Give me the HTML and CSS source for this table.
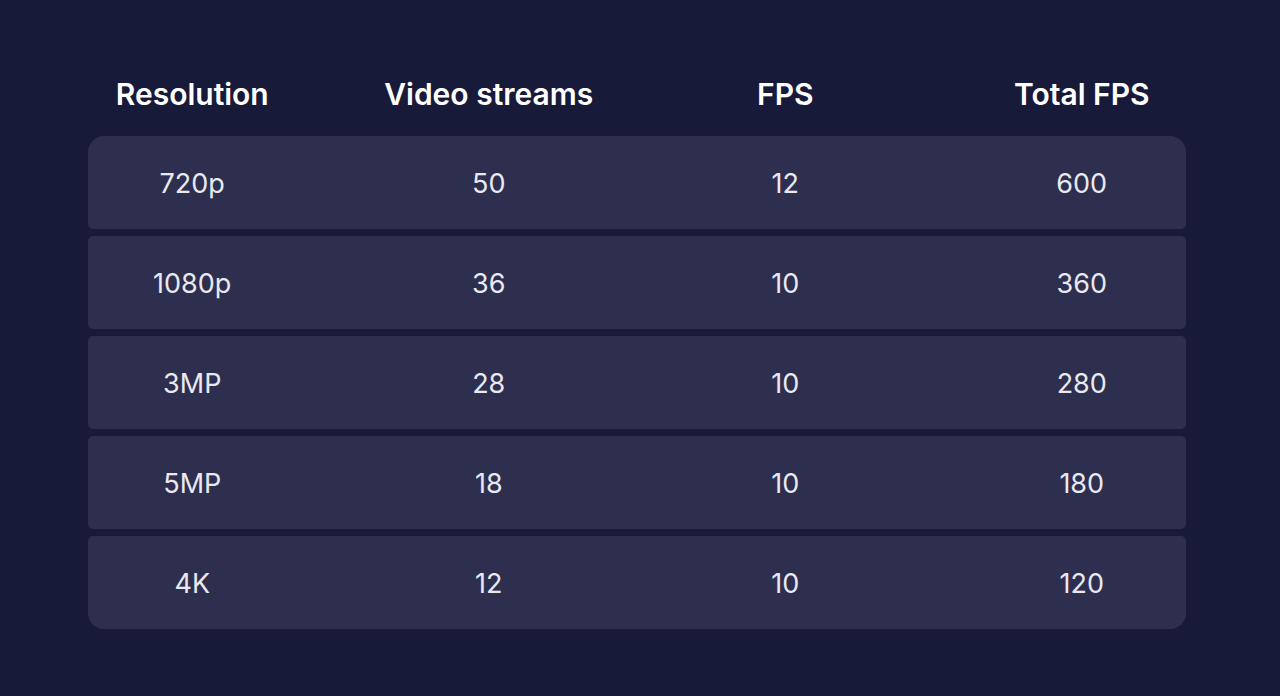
FILE: index.html
```html
<!DOCTYPE html>
<html lang="en">
<head>
<meta charset="utf-8">
<title>Streams table</title>
<link rel="stylesheet" href="styles.css">
</head>
<body>
<div class="page">
  <div class="table">
    <div class="head">
      <div class="cell">Resolution</div>
      <div class="cell">Video streams</div>
      <div class="cell">FPS</div>
      <div class="cell">Total FPS</div>
    </div>
    <div class="rows">
      <div class="row first"><div class="grid"><div class="cell">720p</div><div class="cell">50</div><div class="cell">12</div><div class="cell">600</div></div></div>
      <div class="row"><div class="grid"><div class="cell">1080p</div><div class="cell">36</div><div class="cell">10</div><div class="cell">360</div></div></div>
      <div class="row"><div class="grid"><div class="cell">3MP</div><div class="cell">28</div><div class="cell">10</div><div class="cell">280</div></div></div>
      <div class="row"><div class="grid"><div class="cell">5MP</div><div class="cell">18</div><div class="cell">10</div><div class="cell">180</div></div></div>
      <div class="row last"><div class="grid"><div class="cell">4K</div><div class="cell">12</div><div class="cell">10</div><div class="cell">120</div></div></div>
    </div>
  </div>
</div>
</body>
</html>
```
FILE: styles.css
```css
html, body {
  margin: 0;
  padding: 0;
  background: #181a3a;
}
body {
  font-family: Inter, "Noto Sans", sans-serif;
  width: 1280px;
  height: 696px;
  overflow: hidden;
}
.page {
  padding: 66px 50px 0 44px;
}
.table {
  display: flex;
  flex-direction: column;
}
.head {
  display: grid;
  grid-template-columns: repeat(4, 1fr);
  height: 56px;
  align-items: center;
  margin-bottom: 14px;
}
.head .cell {
  text-align: center;
  color: #ffffff;
  font-weight: 600;
  font-size: 30px;
}
.rows {
  display: flex;
  flex-direction: column;
  gap: 7px;
  margin: 0 44px;
}
.row {
  height: 93px;
  background: #2e2f4e;
  border-radius: 5px;
  display: flex;
  align-items: center;
  padding-top: 2px;
  box-sizing: border-box;
}
.row.first {
  border-radius: 16px 16px 5px 5px;
}
.row.last {
  border-radius: 5px 5px 16px 16px;
}
.grid {
  flex: 1;
  display: grid;
  grid-template-columns: repeat(4, 1fr);
  margin: 0 -44px;
}
.grid .cell {
  text-align: center;
  color: #e9e9f2;
  font-size: 27px;
  font-weight: 400;
}
```
